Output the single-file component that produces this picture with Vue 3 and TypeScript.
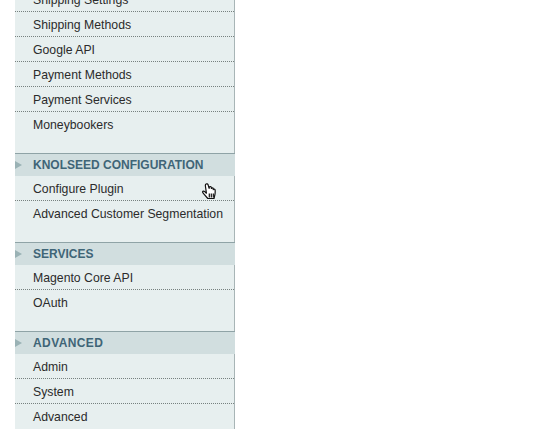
<script setup lang="ts">
interface ConfigSection {
  title?: string
  spaced?: boolean
  items: string[]
}

const sections: ConfigSection[] = [
  {
    items: ['Shipping Settings', 'Shipping Methods', 'Google API', 'Payment Methods', 'Payment Services', 'Moneybookers'],
  },
  { title: 'KNOLSEED CONFIGURATION', items: ['Configure Plugin', 'Advanced Customer Segmentation'] },
  { title: 'SERVICES', items: ['Magento Core API', 'OAuth'] },
  { title: 'ADVANCED', spaced: true, items: ['Admin', 'System', 'Advanced'] },
]
</script>

<template>
  <div class="page">
    <nav class="config-nav">
      <section v-for="(section, i) in sections" :key="i" class="section">
        <h3 v-if="section.title" class="section-title" :class="{ spaced: section.spaced }">
          <span class="arrow"></span>
          {{ section.title }}
        </h3>
        <ul class="links">
          <li v-for="item in section.items" :key="item" class="link">
            {{ item }}
            <svg
              v-if="item === 'Configure Plugin'"
              class="hand"
              viewBox="0 0 16 20"
              width="17"
              height="20"
            >
              <path
                d="M4.500 1.100c.8-.6 1.800-.2 2.100.7l1 3.500.2-1c.2-1.100 1.800-1 1.900 0l.2 1.200c.3-1 1.700-.9 1.800.1l.1 1c.4-.8 1.700-.6 1.800.3.200 1.800.1 3.600-.3 5.300l-.8 3.300H6.300L2.500 11.200C1.700 10.300 .9 9.500 1.100 8.800c.3-.9 1.400-.8 2.100-.2l1.700 1.600L3.900 3c-.1-.8 0-1.500.6-1.900z"
                fill="#fff"
                stroke="#111"
                stroke-width="1.200"
                stroke-linejoin="round"
              />
              <path d="M7.800 10.500v4M9.800 10.500v4M11.800 10.500v4" stroke="#111" stroke-width="1.200" fill="none" />
            </svg>
          </li>
        </ul>
      </section>
    </nav>
  </div>
</template>

<style>
html,
body {
  margin: 0;
  background: #fff;
  overflow: hidden;
}
</style>

<style scoped>
.page {
  width: 552px;
  height: 429px;
  overflow: hidden;
  padding-left: 15px;
  box-sizing: border-box;
}

.config-nav {
  width: 220px;
  margin-top: -13px;
  font-family: 'Liberation Sans', Arial, sans-serif;
}

.section-title {
  display: flex;
  align-items: center;
  height: 22px;
  margin: 0;
  border-top: 1px solid #8fa3a6;
  background: #d1dedf;
  color: #3f6577;
  font-size: 12px;
  font-weight: 700;
  position: relative;
  padding-left: 18px;
}

.section-title.spaced {
  letter-spacing: 0.4px;
}

.arrow {
  position: absolute;
  left: 0;
  top: 7px;
  border-left: 7px solid #9ab2b5;
  border-top: 4px solid transparent;
  border-bottom: 4px solid transparent;
}

.links {
  list-style: none;
  margin: 0;
  padding: 0 0 17px;
  background: #e7efef;
  border-right: 1px solid #a8b5b6;
}

.link {
  position: relative;
  height: 24px;
  line-height: 26px;
  padding-left: 18px;
  border-bottom: 1px dotted #77817f;
  color: #2b2b2b;
  font-size: 12.25px;
}

.link:last-child {
  border-bottom: 0;
}

.hand {
  position: absolute;
  left: 186px;
  top: 7px;
}
</style>
